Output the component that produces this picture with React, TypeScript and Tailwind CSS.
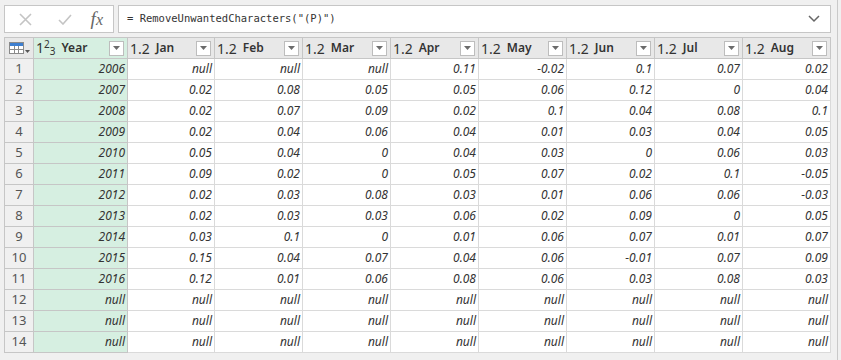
import React from "react";

const months = ["Jan", "Feb", "Mar", "Apr", "May", "Jun", "Jul", "Aug"];

const years: (string | null)[] = [
  "2006", "2007", "2008", "2009", "2010", "2011", "2012", "2013", "2014", "2015", "2016", null, null, null,
];

const values: (string | null)[][] = [
  [null, null, null, "0.11", "-0.02", "0.1", "0.07", "0.02"],
  ["0.02", "0.08", "0.05", "0.05", "0.06", "0.12", "0", "0.04"],
  ["0.02", "0.07", "0.09", "0.02", "0.1", "0.04", "0.08", "0.1"],
  ["0.02", "0.04", "0.06", "0.04", "0.01", "0.03", "0.04", "0.05"],
  ["0.05", "0.04", "0", "0.04", "0.03", "0", "0.06", "0.03"],
  ["0.09", "0.02", "0", "0.05", "0.07", "0.02", "0.1", "-0.05"],
  ["0.02", "0.03", "0.08", "0.03", "0.01", "0.06", "0.06", "-0.03"],
  ["0.02", "0.03", "0.03", "0.06", "0.02", "0.09", "0", "0.05"],
  ["0.03", "0.1", "0", "0.01", "0.06", "0.07", "0.01", "0.07"],
  ["0.15", "0.04", "0.07", "0.04", "0.06", "-0.01", "0.07", "0.09"],
  ["0.12", "0.01", "0.06", "0.08", "0.06", "0.03", "0.08", "0.03"],
  [null, null, null, null, null, null, null, null],
  [null, null, null, null, null, null, null, null],
  [null, null, null, null, null, null, null, null],
];

const ui = { fontFamily: '"Segoe UI", "Noto Sans", "Open Sans", sans-serif' };

function FilterButton() {
  return (
    <div className="w-[15px] h-[15px] shrink-0 bg-white border border-[#bdbdbd] flex items-center justify-center">
      <svg width="7" height="4" viewBox="0 0 7 4">
        <path d="M0 0 H7 L3.5 4 Z" fill="#6b6b6b" />
      </svg>
    </div>
  );
}

function TableIcon() {
  return (
    <div className="flex items-end gap-[1px]">
      <svg width="15" height="12" viewBox="0 0 15 12">
        <rect x="0.5" y="0.5" width="14" height="11" fill="#fff" stroke="#8a8a8a" />
        <rect x="1" y="1" width="13" height="3" fill="#3d7fd0" />
        <path d="M1 7.5 H14 M5.5 4 V11 M9.5 4 V11" stroke="#8a8a8a" />
      </svg>
      <svg width="5" height="3" viewBox="0 0 5 3" className="mb-[1px]">
        <path d="M0 0 H5 L2.5 3 Z" fill="#555" />
      </svg>
    </div>
  );
}

export default function App() {
  return (
    <div className="w-[841px] h-[360px] bg-[#f0f0f0] flex overflow-hidden" style={ui}>
      <div className="w-[838px] border-r border-[#c9c9c9] pl-[4px] pr-[6px] pt-[5px] flex flex-col">
        {/* formula bar */}
        <div className="flex gap-[4px] h-[28px]">
          <div className="w-[110px] bg-white border border-[#c6c6c6] flex items-center justify-between pl-[14px] pr-[10px]">
            <svg width="13" height="13" viewBox="0 0 13 13">
              <path d="M1 1 L12 12 M12 1 L1 12" stroke="#c4c4c4" strokeWidth="1.6" />
            </svg>
            <svg width="14" height="11" viewBox="0 0 14 11" className="ml-[8px]">
              <path d="M1 6 L5 10 L13 1" stroke="#c4c4c4" strokeWidth="1.6" fill="none" />
            </svg>
            <span className="text-[19px] italic text-[#666] leading-none -mt-[2px]" style={{ fontFamily: '"Liberation Serif", serif' }}>
              f<span className="text-[16px]">x</span>
            </span>
          </div>
          <div className="flex-1 bg-white border border-[#c6c6c6] flex items-center justify-between pl-[8px] pr-[10px]">
            <span className="text-[10.5px] text-[#333]" style={{ fontFamily: '"DejaVu Sans Mono", "Liberation Mono", monospace' }}>
              = RemoveUnwantedCharacters("(P)")
            </span>
            <svg width="12" height="8" viewBox="0 0 12 8">
              <path d="M1 1 L6 6 L11 1" stroke="#666" strokeWidth="1.5" fill="none" />
            </svg>
          </div>
        </div>

        {/* grid */}
        <div className="mt-[4px] w-[827px] grid grid-cols-[29px_94px_87px_88px_88px_88px_88px_88px_88px_88px] border-l border-t border-[#c6c6c6] text-[#444]">
          <div className="h-[21px] bg-[#e8e8e8] border-r border-b border-[#c6c6c6] flex items-center justify-center">
            <TableIcon />
          </div>
          <div className="h-[21px] bg-[#d6efe1] border-r border-b border-[#c6c6c6] flex items-center pl-[2px] pr-[3px]">
            <span className="text-[14px] leading-none text-[#333] flex items-start">
              1<span className="text-[10px] leading-none -mt-[2px]">2</span>
              <span className="text-[10px] leading-none mt-[5px]">3</span>
            </span>
            <span className="ml-[6px] text-[12px] font-semibold text-[#333] flex-1">Year</span>
            <FilterButton />
          </div>
          {months.map((m) => (
            <div key={m} className="h-[21px] bg-[#e8e8e8] border-r border-b border-[#c6c6c6] flex items-center pl-[2px] pr-[3px]">
              <span className="text-[14px] text-[#333]">1.2</span>
              <span className="ml-[6px] text-[12px] font-semibold text-[#333] flex-1">{m}</span>
              <FilterButton />
            </div>
          ))}

          {years.map((y, i) => (
            <React.Fragment key={i}>
              <div className="h-[21px] bg-[#f0f0f0] border-r border-b border-[#c6c6c6] flex items-center justify-center text-[13px] text-[#555]">
                {i + 1}
              </div>
              <div className="h-[21px] bg-[#d6efe1] border-r border-b border-[#c6c6c6] flex items-center justify-end pr-[2px] text-[12px] italic text-[#333]">
                {y ?? "null"}
              </div>
              {values[i].map((v, j) => (
                <div key={j} className="h-[21px] bg-white border-r border-b border-[#dadada] flex items-center justify-end pr-[2px] text-[12px] italic text-[#333]">
                  {v ?? "null"}
                </div>
              ))}
            </React.Fragment>
          ))}
        </div>
      </div>
    </div>
  );
}
